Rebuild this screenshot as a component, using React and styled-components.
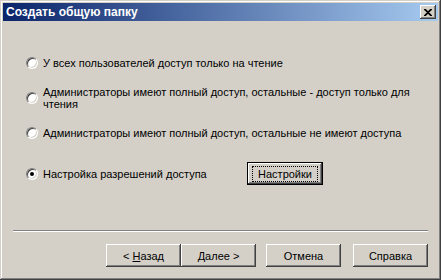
import React from "react";
import styled, { createGlobalStyle } from "styled-components";

const GlobalStyle = createGlobalStyle`
  body {
    margin: 0;
    background: #d4d0c8;
    font-family: Tahoma, "Liberation Sans", Arial, sans-serif;
    font-size: 11px;
  }
`;

const Window = styled.div`
  width: 441px;
  height: 280px;
  box-sizing: border-box;
  padding: 3px;
  background: #d4d0c8;
  display: flex;
  flex-direction: column;
  box-shadow: inset -1px -1px #404040, inset 1px 1px #d4d0c8,
    inset -2px -2px #808080, inset 2px 2px #ffffff;
`;

const TitleBar = styled.div`
  height: 18px;
  display: flex;
  align-items: center;
  justify-content: space-between;
  padding: 0 2px 0 3px;
  background: linear-gradient(to right, #0a246a, #a6caf0);
  color: #fff;
  font-weight: bold;
  font-size: 12px;
`;

const CloseButton = styled.div`
  width: 16px;
  height: 14px;
  box-sizing: border-box;
  background: #d4d0c8;
  display: flex;
  align-items: center;
  justify-content: center;
  box-shadow: inset -1px -1px #404040, inset 1px 1px #ffffff,
    inset -2px -2px #808080, inset 2px 2px #d4d0c8;
`;

const Body = styled.div`
  flex: 1;
  display: flex;
  flex-direction: column;
  padding: 0 10px 10px;
  color: #000;
`;

const Options = styled.div`
  flex: 1;
  display: flex;
  flex-direction: column;
  padding: 36px 0 0 13px;
`;

const OptionRow = styled.div`
  display: flex;
  align-items: center;
  margin-top: ${(p) => p.$top || 0}px;
`;

const Option = styled.label`
  display: flex;
  align-items: center;
  width: ${(p) => (p.$width ? p.$width + "px" : "auto")};
  line-height: 12px;
`;

const Radio = styled.span`
  position: relative;
  flex: none;
  width: 12px;
  height: 12px;
  box-sizing: border-box;
  border-radius: 50%;
  background: #fff;
  margin-right: 5px;
  border: 1px solid;
  border-color: #808080 #ffffff #ffffff #808080;
  box-shadow: inset 1px 1px #404040, inset -1px -1px #d4d0c8;

  &::after {
    content: "";
    display: ${(p) => (p.$checked ? "block" : "none")};
    position: absolute;
    left: 3px;
    top: 3px;
    width: 4px;
    height: 4px;
    border-radius: 50%;
    background: #000;
  }
`;

const Button = styled.button`
  width: ${(p) => p.$width || 75}px;
  height: 23px;
  margin-left: ${(p) => p.$gap || 0}px;
  padding: 0;
  font-family: inherit;
  font-size: 11px;
  color: #000;
  background: #d4d0c8;
  border: none;
  box-shadow: inset -1px -1px #404040, inset 1px 1px #ffffff,
    inset -2px -2px #808080, inset 2px 2px #d4d0c8;
`;

const FocusButton = styled(Button)`
  border: 1px solid #000;
  box-shadow: inset -1px -1px #404040, inset 1px 1px #ffffff,
    inset -2px -2px #808080;

  span {
    display: inline-block;
    padding: 1px 5px;
    outline: 1px dotted #000;
  }
`;

const Separator = styled.div`
  height: 0;
  border-top: 1px solid #808080;
  border-bottom: 1px solid #ffffff;
`;

const ButtonRow = styled.div`
  display: flex;
  justify-content: flex-end;
  margin-top: 12px;
`;

const U = styled.span`
  text-decoration: underline;
`;

export default function App() {
  return (
    <>
      <GlobalStyle />
      <Window>
        <TitleBar>
          <span>Создать общую папку</span>
          <CloseButton>
            <svg width="8" height="7" viewBox="0 0 8 7">
              <path d="M0 0 L7 7 M1 0 L8 7 M7 0 L0 7 M8 0 L1 7" stroke="#000" strokeWidth="1.2" />
            </svg>
          </CloseButton>
        </TitleBar>
        <Body>
          <Options>
            <OptionRow>
              <Option>
                <Radio />
                У всех пользователей доступ только на чтение
              </Option>
            </OptionRow>
            <OptionRow $top={17}>
              <Option>
                <Radio />
                <span>
                  Администраторы имеют полный доступ, остальные - доступ только для
                  <br />
                  чтения
                </span>
              </Option>
            </OptionRow>
            <OptionRow $top={17}>
              <Option>
                <Radio />
                Администраторы имеют полный доступ, остальные не имеют доступа
              </Option>
            </OptionRow>
            <OptionRow $top={23}>
              <Option $width={221}>
                <Radio $checked />
                Настройка разрешений доступа
              </Option>
              <FocusButton $width={76}>
                <span>Настройки</span>
              </FocusButton>
            </OptionRow>
          </Options>
          <Separator />
          <ButtonRow>
            <Button>
              &lt; <U>Н</U>азад
            </Button>
            <Button>
              <U>Д</U>алее &gt;
            </Button>
            <Button $gap={10}>Отмена</Button>
            <Button $gap={12}>Справка</Button>
          </ButtonRow>
        </Body>
      </Window>
    </>
  );
}
